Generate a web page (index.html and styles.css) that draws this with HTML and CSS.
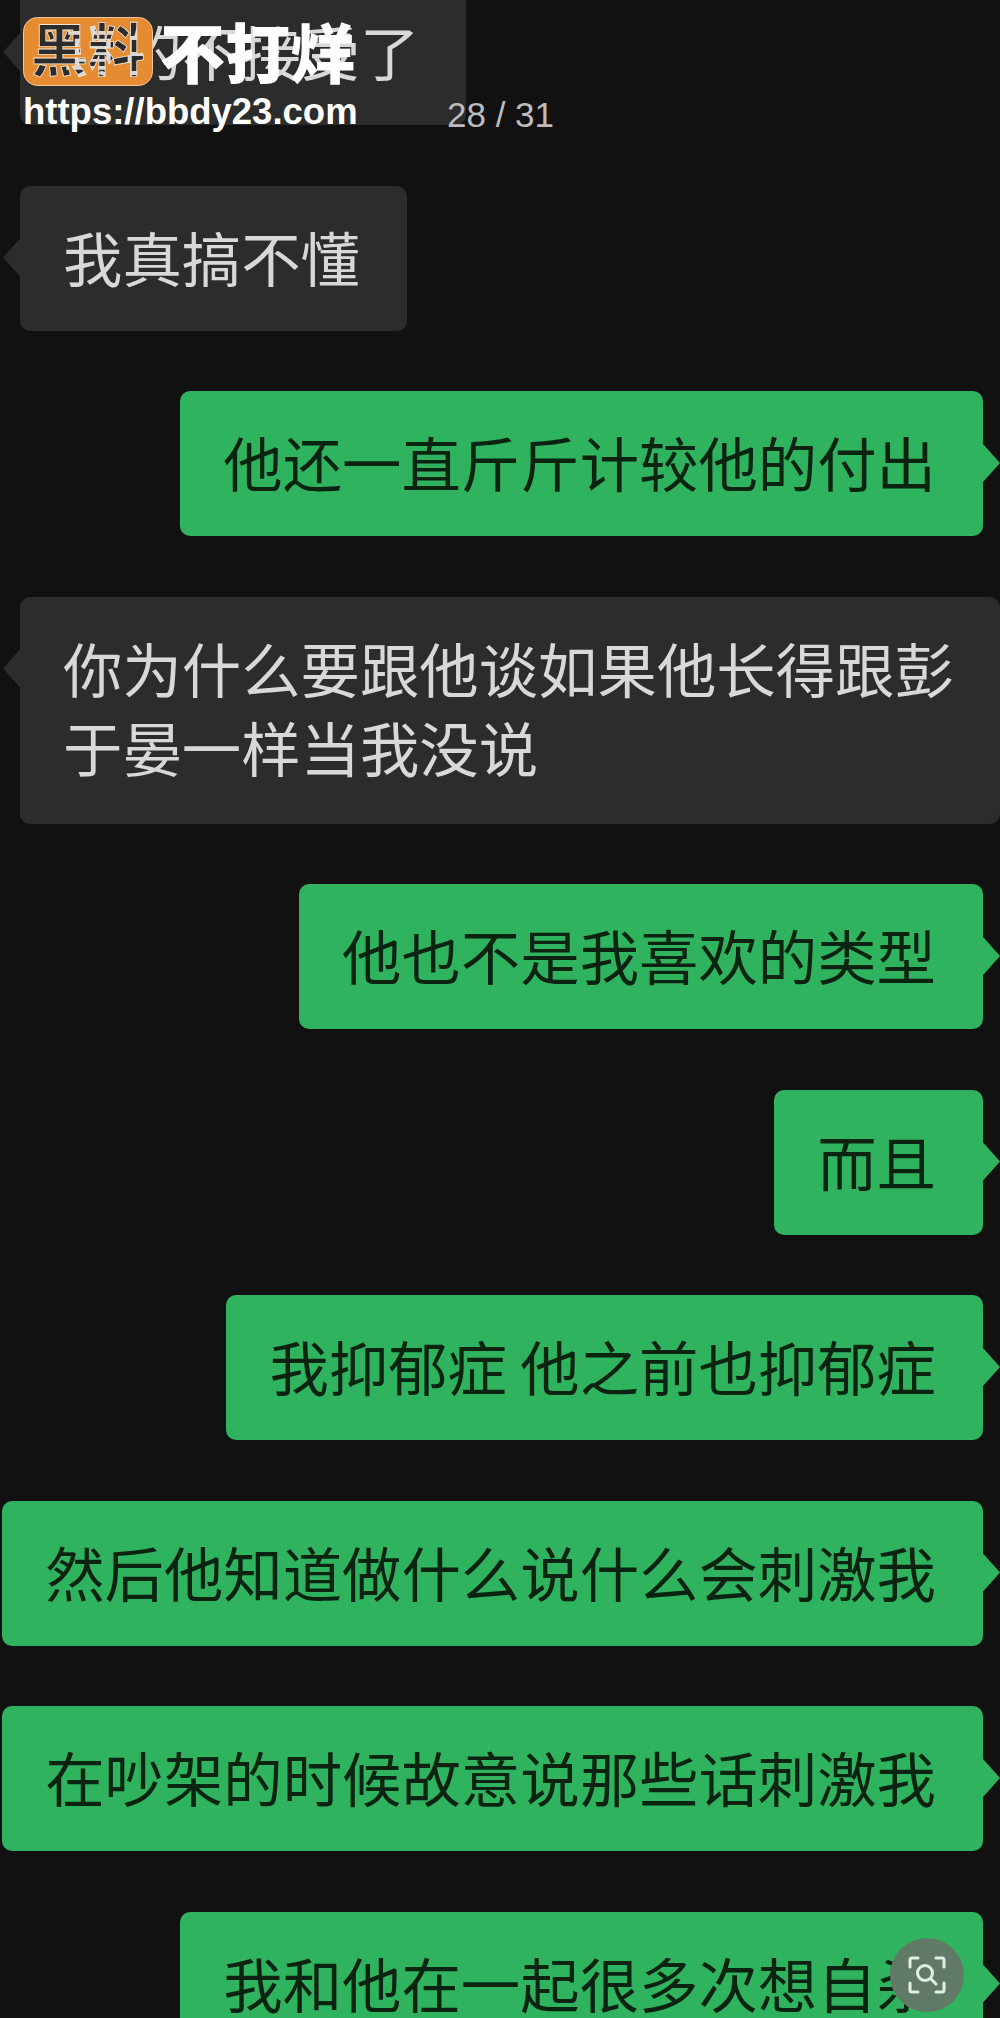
FILE: index.html
```html
<!DOCTYPE html>
<html lang="zh-CN">
<head>
<meta charset="UTF-8">
<meta name="viewport" content="width=device-width, initial-scale=1.0">
<title>28 / 31</title>
<link rel="stylesheet" href="styles.css">
</head>
<body>

<div class="chat">
  <div class="bubble left">真的不接受了</div>
  <div class="bubble left">我真搞不懂</div>
  <div class="bubble right">他还一直斤斤计较他的付出</div>
  <div class="bubble left wide">你为什么要跟他谈如果他长得跟彭<br>于晏一样当我没说</div>
  <div class="bubble right">他也不是我喜欢的类型</div>
  <div class="bubble right">而且</div>
  <div class="bubble right">我抑郁症 他之前也抑郁症</div>
  <div class="bubble right">然后他知道做什么说什么会刺激我</div>
  <div class="bubble right">在吵架的时候故意说那些话刺激我</div>
  <div class="bubble right">我和他在一起很多次想自杀</div>
</div>

<div class="watermark">
  <div class="brand">
    <!-- the logo letters are cut out of the orange, the chat shows through them -->
    <svg class="badge" width="130" height="69" viewBox="0 0 130 69">
      <defs>
        <text id="badgeText" x="65" y="54" text-anchor="middle" class="badge-text">黑料</text>
        <mask id="badgeCut">
          <rect width="130" height="69" fill="#fff"/>
          <use href="#badgeText" fill="#000"/>
        </mask>
      </defs>
      <rect x="0.500" y="0.500" width="129" height="68" rx="14" fill="#e58c33" stroke="#f0c79a" mask="url(#badgeCut)"/>
      <use href="#badgeText" fill="none" stroke="#f2e4d2" stroke-width="0.800"/>
    </svg>
    <span class="slogan">不打烊</span>
  </div>
  <div class="url">https://bbdy23.com</div>
</div>

<div class="pager">28 / 31</div>

<div class="scan">
  <svg width="38" height="38" viewBox="0 0 38 38" fill="none" stroke="#e2efe6" stroke-width="3" stroke-linecap="round">
    <path d="M2 11V4Q2 2 4 2H10"/>
    <path d="M28 2H34Q36 2 36 4V11"/>
    <path d="M2 27V34Q2 36 4 36H10"/>
    <path d="M28 36H34Q36 36 36 34V27"/>
    <circle cx="17" cy="17" r="7.500"/>
    <path d="M23 23L28 28"/>
  </svg>
</div>

</body>
</html>
```

FILE: styles.css
```css
html, body {
  margin: 0;
  height: 2018px;
  overflow: hidden;
  background-color: #111112;
}
body {
  position: relative;
  font-family: "Noto Sans CJK SC", "Liberation Sans", sans-serif;
}
.chat {
  display: flex;
  flex-direction: column;
  gap: 60.500px;
  margin-top: -20px;
  padding: 0 17px 0 20px;
  filter: blur(0.5px);
}
.bubble {
  position: relative;
  box-sizing: border-box;
  padding: 30px 47px 34px 43px;
  border-radius: 10px;
  font-size: 59.400px;
  font-weight: 400;
  line-height: 81px;
  white-space: nowrap;
}
.left {
  align-self: flex-start;
  background-color: #2c2c2c;
  color: #d8d8d8;
}
.right {
  align-self: flex-end;
  background-color: #30b35f;
  color: #0b2412;
}
.wide {
  width: 980px;
  margin-right: -17px;
  padding-top: 31px;
  padding-bottom: 38px;
  line-height: 79px;
}
.bubble::after {
  content: "";
  position: absolute;
  top: 53px;
  width: 17px;
  height: 38px;
  background-color: inherit;
}
.left::after {
  left: -17px;
  clip-path: polygon(100% 0, 0 50%, 100% 100%);
}
.right::after {
  right: -17px;
  clip-path: polygon(0 0, 100% 50%, 0 100%);
}
.watermark {
  position: absolute;
  top: 17px;
  left: 23px;
}
.brand {
  display: flex;
  align-items: flex-start;
  gap: 7px;
}
.badge-text {
  font-size: 57px;
  font-weight: 700;
}
.slogan {
  margin-top: -2px;
  color: #fff;
  font-size: 65px;
  font-weight: 900;
  line-height: 70px;
  white-space: nowrap;
}
.url {
  margin-top: 5px;
  color: #fff;
  font-family: "Liberation Sans", Arial, sans-serif;
  font-size: 36.500px;
  font-weight: 700;
  line-height: 42px;
}
.pager {
  position: absolute;
  top: 94px;
  left: 447px;
  color: #bdbdbd;
  font-family: "Liberation Sans", Arial, sans-serif;
  font-size: 35px;
  line-height: 42px;
}
.scan {
  position: absolute;
  top: 1938px;
  left: 890px;
  display: flex;
  align-items: center;
  justify-content: center;
  width: 74px;
  height: 74px;
  border-radius: 50%;
  background-color: #617a68;
}
```
